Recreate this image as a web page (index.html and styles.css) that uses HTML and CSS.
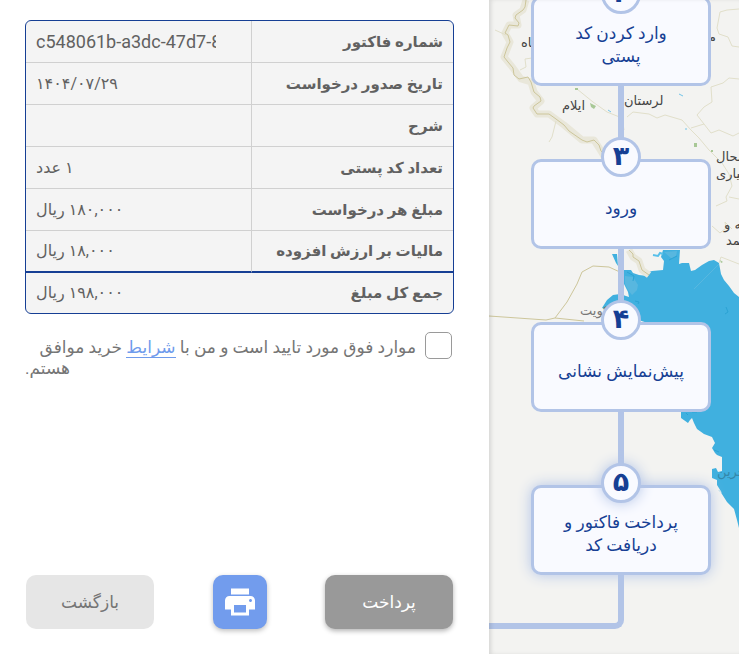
FILE: index.html
```html
<!DOCTYPE html>
<html lang="fa" dir="rtl">
<head>
<meta charset="utf-8">
<meta name="viewport" content="width=device-width, initial-scale=1">
<title>پرداخت فاکتور</title>
<link rel="stylesheet" href="styles.css">
</head>
<body>
<aside class="progress">
  <svg class="map" viewBox="0 0 250 654" preserveAspectRatio="xMinYMin slice" aria-hidden="true">
    <path class="sea" d="M135 270L142 270 144 273 150 275 158 276 160 272 163 271 174 270 175 261 172 257 174 250H191L190 264 193 263H200L202 271 206 270 213 265 220 261 225 260 230 263 232 274 235 280 240 286 245 293 250 297V528L248 520 245 509 243 507 238 502 231 491 229 490 233 493 228 485 228 480 223 478V469L227 468 229 472 233 471V457L228 455 226 453 223 448 226 443 223 437 215 434 208 429 205 423 203 418 201 420 199 423 192 418V407L180 330 113 308 118 300 124 295 131 294 140 297 139 292 135 284ZM123 254L128 254 129 266 127 263Z"/>
    <path class="sea-shade" d="M136 276L144 277 149 285 148 290 143 295 139 290 136 284ZM175 252L188 251 187 256 183 259Z"/>
    <path class="sea-detail" d="M138 272L145 276 144 281M146 301L150 302 149 304M237 307L239 312 236 314M180 260L188 256M197 413L199 415M203 412L208 412M225 450L230 452"/>
    <path class="sea-route" d="M205 289L230 264"/>
    <path class="creek" d="M164 255L169 256 171 253 174 254"/>
    <g class="border-glow">
      <path d="M37 0L34 10 27 15 29 25 20 25 16 33 21 42 15 57 24 68 32 79 42 82 45 92 52 101 44 108 48 114 60 114 75 125 93 140 105 140 112 151 120 165"/>
      <path d="M140 250L144 257 150 261 153 270 160 275"/>
    </g>
    <g class="border-line">
      <path d="M37 0L36 7 34 10 27 15 26 18 30 23 29 26 20 25 16 33 19 35 21 42 18 48 15 57 19 62 24 68 25 75 30 79 39 77 42 82 45 92 51 97 52 101 45 106 44 108 48 114 60 114 67 119 75 125 80 131 93 140 98 142 105 140 110 145 112 151 116 155 120 165"/>
      <path d="M140 250L144 254 144 257 150 261 153 270 160 275"/>
      <path d="M0 316L57 320 66 318 95 321M66 318L78 302 88 284 93 272 104 266 120 267 133 273"/>
    </g>
    <g class="province">
      <path d="M250 47L243 46 239 37 230 34 228 28 231 12 238 10 250 9M6 30L17 35M43 58L36 59 37 67 31 70"/>
      <path d="M88 89L104 102 118 112 133 118 135 130M138 117L144 112 160 114 168 118 176 115 193 120 202 130 210 138 220 150 233 163 240 174 243 186 237 197 238 201 227 206"/>
      <path d="M250 79L240 78 234 83 222 87 223 102 215 107 208 115 215 124 202 128M215 124L222 133 230 130 244 136 250 133M67 121L63 137 60 142M223 226L231 233 237 228 236 222 243 229M250 199L240 197M250 264L232 257 230 263"/>
    </g>
    <path class="green-dot" d="M101 103L107 106 105 109 102 107ZM205 143H208V147H205ZM86 88H89V90H86ZM222 150H224V152H222ZM231 260L234 262 232 263Z"/>
    <path class="lake" d="M190 94L194 96M119 110L122 112M197 128V130"/>
    <g class="place">
      <text x="32" y="47">کرمانشاه</text>
      <text class="to-left" x="227" y="41">مرکزی</text>
      <text x="73" y="110">ایلام</text>
      <text x="135" y="105">لرستان</text>
      <text x="227" y="161">چهارمحال</text>
      <text x="227" y="178">و بختیاری</text>
      <text x="235" y="229">کهگیلویه و</text>
      <text x="237" y="245">بویراحمد</text>
      <text class="country" x="91" y="315">کویت</text>
      <text class="at-sea" x="228" y="476">بحرین</text>
    </g>
  </svg>
  <ol class="steps">
    <li class="step"><span class="badge">۲</span>وارد کردن کد پستی</li>
    <li class="step"><span class="badge">۳</span>ورود</li>
    <li class="step"><span class="badge">۴</span>پیش‌نمایش نشانی</li>
    <li class="step current"><span class="badge">۵</span>پرداخت فاکتور و دریافت کد</li>
  </ol>
  <div class="elbow"></div>
</aside>
<main class="invoice">
  <table class="bill">
    <tbody>
      <tr><th scope="row"><label for="number">شماره فاکتور</label></th><td><input class="number" id="number" type="text" dir="ltr" value="c548061b-a3dc-47d7-8f21" readonly></td></tr>
      <tr><th scope="row">تاریخ صدور درخواست</th><td>۱۴۰۴/۰۷/۲۹</td></tr>
      <tr><th scope="row">شرح</th><td></td></tr>
      <tr><th scope="row">تعداد کد پستی</th><td>۱ عدد</td></tr>
      <tr><th scope="row">مبلغ هر درخواست</th><td>۱۸۰,۰۰۰ ریال</td></tr>
      <tr><th scope="row">مالیات بر ارزش افزوده</th><td>۱۸,۰۰۰ ریال</td></tr>
    </tbody>
    <tfoot>
      <tr><th scope="row">جمع کل مبلغ</th><td>۱۹۸,۰۰۰ ریال</td></tr>
    </tfoot>
  </table>
  <div class="consent">
    <input class="tick" type="checkbox" id="agree">
    <label class="terms" for="agree">موارد فوق مورد تایید است و من با <a href="#terms">شرایط</a> خرید موافق هستم.</label>
  </div>
  <div class="actions">
    <button class="button pay" type="button">پرداخت</button>
    <button class="button print" type="button" aria-label="چاپ">
      <svg viewBox="0 0 24 24" width="36" height="36" aria-hidden="true"><path fill="currentColor" d="M19 8H5c-1.660 0-3 1.340-3 3v6h4v4h12v-4h4v-6c0-1.660-1.340-3-3-3zm-3 11H8v-5h8v5zm3-7c-.55 0-1-.45-1-1s.45-1 1-1 1 .45 1 1-.45 1-1 1zm-1-9H6v4h12V3z"/></svg>
    </button>
    <button class="button back" type="button">بازگشت</button>
  </div>
</main>
</body>
</html>
```
FILE: styles.css
```css
* {
  box-sizing: border-box;
}

body {
  display: flex;
  min-height: 100vh;
  margin: 0;
  background: #fff;
  color: #616161;
  font-family: Roboto, "DejaVu Sans", sans-serif;
  font-size: 17px;
}

.invoice {
  flex: 1;
  display: flex;
  flex-direction: column;
  min-width: 0;
  padding: 20px 35px 25px 25px;
}

.bill {
  width: 100%;
  table-layout: fixed;
  border: 1px solid #163f94;
  border-radius: 6px;
  border-spacing: 0;
  background: #f4f4f4;
}

.bill th,
.bill td {
  height: 42px;
  padding: 0 10px;
  border-bottom: 1px solid #d0d0d0;
  font-size: 16px;
  line-height: 24px;
  white-space: nowrap;
}

.bill th {
  width: 47%;
  font-size: 15px;
  text-align: right;
}

.bill td {
  border-right: 1px solid #d0d0d0;
  text-align: left;
}

.bill tbody tr:last-child > * {
  border-bottom: 2px solid #163f94;
}

.bill tfoot th,
.bill tfoot td {
  height: 40px;
  border: 0;
}

.number {
  display: block;
  width: 180px;
  margin-right: auto;
  padding: 0;
  border: 0;
  outline: 0;
  background: transparent;
  color: inherit;
  font: 18px Roboto, sans-serif;
}

.consent {
  display: flex;
  align-items: flex-start;
  gap: 9px;
  padding: 18px 2px 0 0;
}

.tick {
  flex: none;
  width: 27px;
  height: 27px;
  margin: 0;
  appearance: none;
  border: 1px solid #9a9a9a;
  border-radius: 5px;
  background: #fff;
}

.tick:checked {
  background: #6f9bec;
}

.terms {
  flex: 1;
  padding-top: 5px;
  color: #757575;
  line-height: 21px;
  text-align: right;
  text-align-last: left;
}

.terms a {
  border-bottom: 1px solid #6f9bec;
  color: #6f9bec;
  text-decoration: none;
}

.actions {
  display: flex;
  justify-content: space-between;
  margin-top: auto;
  padding: 0 1px;
}

.button {
  display: flex;
  align-items: center;
  justify-content: center;
  width: 128px;
  height: 54px;
  padding: 0;
  border: 0;
  border-radius: 10px;
  font: inherit;
}

.pay {
  background: #999;
  box-shadow: 0 2px 5px rgb(0 0 0 / 30%);
  color: #fff;
}

.print {
  width: 54px;
  background: #729ced;
  box-shadow: 0 2px 5px rgb(0 0 0 / 25%);
  color: #fff;
}

.back {
  background: #e6e6e6;
  color: #757575;
}

.progress {
  position: relative;
  flex: none;
  display: flex;
  flex-direction: column;
  justify-content: flex-end;
  width: 250px;
  height: 100vh;
  padding-bottom: 25px;
  overflow: hidden;
  background: #f3f3f1;
}

.progress::after {
  content: "";
  position: absolute;
  inset: 0;
  box-shadow: inset 3px 0 4px -1px rgb(0 0 0 / 12%);
  pointer-events: none;
}

.map {
  position: absolute;
  inset: 0;
  width: 100%;
  height: 100%;
  fill: none;
}

.sea {
  fill: #40b0df;
}

.sea-shade {
  fill: #58b7df;
}

.sea-detail {
  stroke: #2ba3d4;
}

.sea-route {
  stroke: #58b7df;
}

.creek {
  stroke: #58c0ea;
  stroke-width: 2;
}

.border-glow {
  stroke: #e9e7da;
  stroke-width: 7;
  stroke-linejoin: round;
}

.border-line {
  stroke: #cdc69b;
  stroke-width: 1;
}

.province {
  stroke: #e1dfca;
}

.green-dot {
  fill: #a8c896;
}

.lake {
  stroke: #72c4e8;
}

.place {
  direction: ltr;
  fill: #444;
  font-family: "DejaVu Sans", sans-serif;
  font-size: 13px;
}

.to-left {
  text-anchor: end;
}

.country {
  fill: #777;
}

.at-sea {
  fill: #3488aa;
}

.steps {
  position: relative;
  flex: none;
  display: flex;
  flex-direction: column;
  gap: 73px;
  margin: 0;
  padding: 0 28px 0 42px;
  list-style: none;
}

.step {
  position: relative;
  display: flex;
  align-items: center;
  justify-content: center;
  height: 90px;
  padding: 8px 24px 0;
  border: 3px solid #b2c4e7;
  border-radius: 10px;
  background: #f9faff;
  color: #163f94;
  line-height: 23px;
  text-align: center;
}

.step:not(:last-child)::after {
  content: "";
  position: absolute;
  top: 100%;
  left: 50%;
  width: 6px;
  height: 76px;
  margin-left: -3px;
  background: #b2c4e7;
}

.current,
.current .badge {
  box-shadow: 0 0 14px #b2c4e7;
}

.badge {
  position: absolute;
  top: -25px;
  left: 50%;
  z-index: 1;
  width: 40px;
  height: 40px;
  margin-left: -20px;
  border: 3px solid #b2c4e7;
  border-radius: 50%;
  background: #f9faff;
  font-size: 27px;
  font-weight: 700;
  line-height: 32px;
}

.elbow {
  position: relative;
  flex: none;
  align-self: flex-end;
  width: 135px;
  height: 54px;
  border: solid #b2c4e7;
  border-width: 0 6px 6px 0;
  border-bottom-right-radius: 9px;
}
```
